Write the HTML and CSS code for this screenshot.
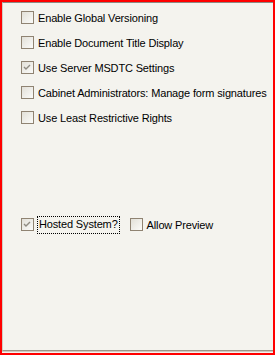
FILE: index.html
```html
<!DOCTYPE html>
<html>
<head>
    <title>Settings</title>
    <link rel="stylesheet" href="styles.css">
</head>
<body>
    <div class="frame">
        <div class="page">
            <div class="options">
                <label class="option"><span class="box"></span>Enable Global Versioning</label>
                <label class="option"><span class="box"></span>Enable Document Title Display</label>
                <label class="option"><span class="box checked"><svg viewBox="0 0 11 11" width="11" height="11"><polyline points="2,5 4,7 8,3" /></svg></span>Use Server MSDTC Settings</label>
                <label class="option"><span class="box"></span>Cabinet Administrators: Manage form signatures</label>
                <label class="option"><span class="box"></span>Use Least Restrictive Rights</label>
            </div>

            <div class="hosted-row">
                <label class="option"><span class="box checked"><svg viewBox="0 0 11 11" width="11" height="11"><polyline points="2,5 4,7 8,3" /></svg></span><span class="focus">Hosted System?</span></label>
                <label class="option"><span class="box"></span>Allow Preview</label>
            </div>
        </div>
    </div>
</body>
</html>
```

FILE: styles.css
```css
body { margin: 0; font-family: "Liberation Sans", Arial, sans-serif; font-size: 11px; letter-spacing: -0.15px; color: #000; }

.frame {
    width: 275px;
    height: 355px;
    box-sizing: border-box;
    border: 2px solid #ff0000;
    background: #f4f3ee;
    padding-bottom: 2px;
}

.page {
    height: 100%;
    box-sizing: border-box;
    border-top: 1px solid #8c8a84;
    border-left: 1px solid #d0cdc4;
    border-bottom: 1px solid #9d9588;
    box-shadow: 0 1px 0 #cfcac0;
    padding: 8px 0 0 18px;
}

.options {
    display: flex;
    flex-direction: column;
    gap: 12px;
}

.option {
    display: flex;
    align-items: center;
    gap: 4px;
    height: 13px;
    white-space: nowrap;
}

.box {
    width: 13px;
    height: 13px;
    box-sizing: border-box;
    border: 1px solid #8f8372;
    background: linear-gradient(135deg, #e2e0d8, #fbfbf9);
    flex: none;
    display: flex;
}

.box svg polyline {
    fill: none;
    stroke: #8f8b82;
    stroke-width: 1.4;
}

.hosted-row {
    display: flex;
    gap: 11px;
    margin-top: 94px;
}

.focus {
    outline: 1px dotted #000;
    padding: 1px 1px 2px 1px;
    line-height: 13px;
}
```
